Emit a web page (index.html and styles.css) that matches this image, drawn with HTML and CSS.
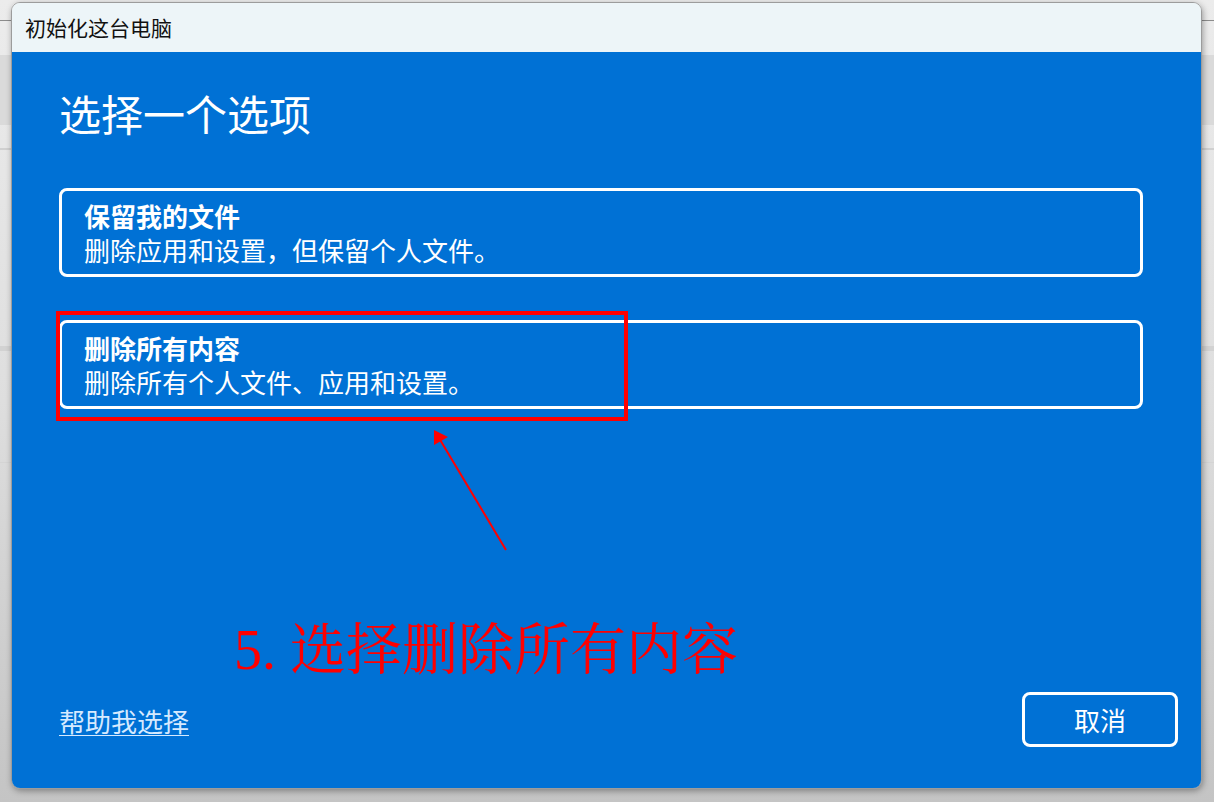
FILE: index.html
```html
<!DOCTYPE html>
<html lang="zh-CN">
<head>
<meta charset="utf-8">
<title>初始化这台电脑</title>
<link rel="stylesheet" href="styles.css">
</head>
<body>
<div class="dialog">
  <div class="titlebar">初始化这台电脑</div>
  <div class="main">
    <h1 class="heading">选择一个选项</h1>
    <div class="options">
      <div class="card">
        <div class="card-title">保留我的文件</div>
        <div class="card-sub">删除应用和设置，但保留个人文件。</div>
      </div>
      <div class="card">
        <div class="card-title">删除所有内容</div>
        <div class="card-sub">删除所有个人文件、应用和设置。</div>
      </div>
    </div>
    <div class="footer">
      <a class="help" href="#">帮助我选择</a>
      <button class="cancel" type="button">取消</button>
    </div>
  </div>
  <svg class="marks" width="1189" height="785" viewBox="12 3 1189 785">
    <rect x="58" y="313" width="568" height="106" fill="none" stroke="#ff0000" stroke-width="4"/>
    <line x1="506" y1="550" x2="439" y2="438" stroke="#ff0000" stroke-width="2"/>
    <polygon points="434,430 434,445 448,437" fill="#ff0000"/>
  </svg>
  <div class="note"><span class="note-num">5. </span>选择删除所有内容</div>
</div>
</body>
</html>
```

FILE: styles.css
```css
html, body {
  margin: 0;
  padding: 0;
}
body {
  width: 1214px;
  height: 802px;
  overflow: hidden;
  display: flex;
  align-items: flex-start;
  font-family: "Noto Sans CJK SC", "Microsoft YaHei", sans-serif;
  background:
    linear-gradient(#8c8c8c, #8c8c8c) 0 20px / 100% 1px no-repeat,
    linear-gradient(#dadada, #dadada) 0 55px / 100% 70px no-repeat,
    linear-gradient(#d0d0d0, #d0d0d0) 0 148px / 100% 2px no-repeat,
    linear-gradient(#d2d2d2, #d2d2d2) 0 346px / 100% 5px no-repeat,
    linear-gradient(#d4d4d4, #d4d4d4) 0 462px / 100% 1px no-repeat,
    linear-gradient(180deg, #ececec 0%, #dedede 50%, #c4c4c4 100%);
}
.dialog {
  position: relative;
  margin: 2px 0 0 11px;
  width: 1191px;
  height: 787px;
  box-sizing: border-box;
  border: 1px solid #9c9c9c;
  border-radius: 9px;
  overflow: hidden;
  display: flex;
  flex-direction: column;
  box-shadow: 1px 2px 6px rgba(0, 0, 0, 0.35);
}
.titlebar {
  height: 49px;
  flex: none;
  background: #edf5f8;
  color: #111;
  font-size: 21px;
  line-height: 49px;
  padding-left: 13px;
}
.main {
  flex: 1;
  background: #0071d5;
  color: #fff;
  padding: 36px 23px 41px 47px;
  display: flex;
  flex-direction: column;
}
.heading {
  margin: 0;
  font-size: 42px;
  font-weight: 400;
  line-height: 50px;
}
.options {
  margin-top: 50px;
  margin-right: 35px;
  display: flex;
  flex-direction: column;
  gap: 43px;
}
.card {
  border: 3px solid #fff;
  border-radius: 8px;
  padding: 8px 22px 7px;
}
.card-title {
  font-size: 26px;
  font-weight: 700;
  line-height: 34px;
}
.card-sub {
  font-size: 26px;
  line-height: 34px;
}
.footer {
  margin-top: auto;
  display: flex;
  justify-content: space-between;
  align-items: center;
}
.help {
  color: #d6eaff;
  font-size: 26px;
  line-height: 30px;
  text-decoration: underline;
  text-underline-offset: 3px;
  text-decoration-thickness: 1px;
  margin-top: 3px;
}
.cancel {
  width: 156px;
  height: 55px;
  box-sizing: border-box;
  border: 3px solid #fff;
  border-radius: 8px;
  background: transparent;
  color: #fff;
  font-family: inherit;
  font-size: 26px;
  padding: 0;
  line-height: 1;
}
.marks {
  position: absolute;
  left: 0;
  top: 0;
  pointer-events: none;
}
.note {
  position: absolute;
  left: 222px;
  top: 614px;
  color: #ff0000;
  font-family: "Noto Serif CJK SC", "Source Han Serif SC", "AR PL UMing CN", "Noto Sans CJK SC", serif;
  font-size: 56px;
  line-height: 56px;
  white-space: nowrap;
}
.note-num {
  font-family: "Liberation Serif", serif;
}
```
